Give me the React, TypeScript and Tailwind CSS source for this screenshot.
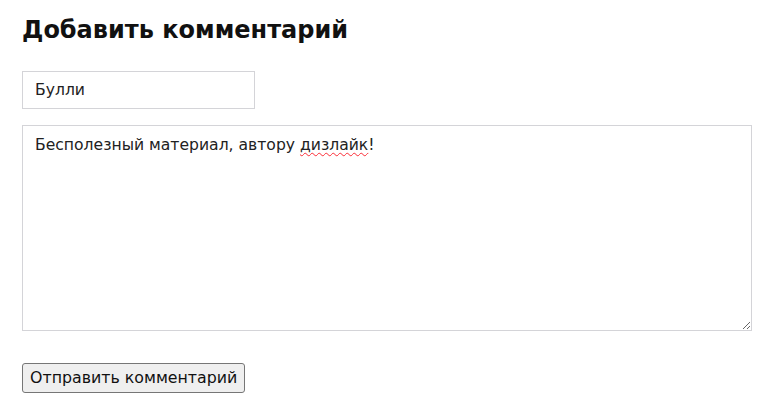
import { useState } from "react";

export default function App() {
  const [name, setName] = useState("Булли");

  return (
    <div className="min-h-screen bg-white px-[22px] pt-[14px] text-[#222] [font-family:'DejaVu_Sans',sans-serif]">
      <h2 className="text-[24px] font-bold leading-[32px] text-[#111]">Добавить комментарий</h2>

      <form className="mt-[25px]" onSubmit={(e) => e.preventDefault()}>
        <input
          type="text"
          value={name}
          onChange={(e) => setName(e.target.value)}
          className="block h-[38px] w-[233px] border border-[#d4d4d8] bg-white px-3 text-[15.6px] text-[#222] outline-none"
        />

        <div className="mt-[16px] h-[206px] w-[730px] resize overflow-auto border border-[#d4d4d8] bg-white px-3 py-[7px] text-[15.6px] leading-[24px]">
          Бесполезный материал, автору{" "}
          <span className="underline decoration-red-500 decoration-wavy decoration-1 underline-offset-2">
            дизлайк
          </span>
          !
        </div>

        <button
          type="submit"
          className="mt-[32px] block h-[30px] rounded-[3px] border border-[#767676] bg-[#efefef] px-[7px] text-[15.8px] text-[#111]"
        >
          Отправить комментарий
        </button>
      </form>
    </div>
  );
}
